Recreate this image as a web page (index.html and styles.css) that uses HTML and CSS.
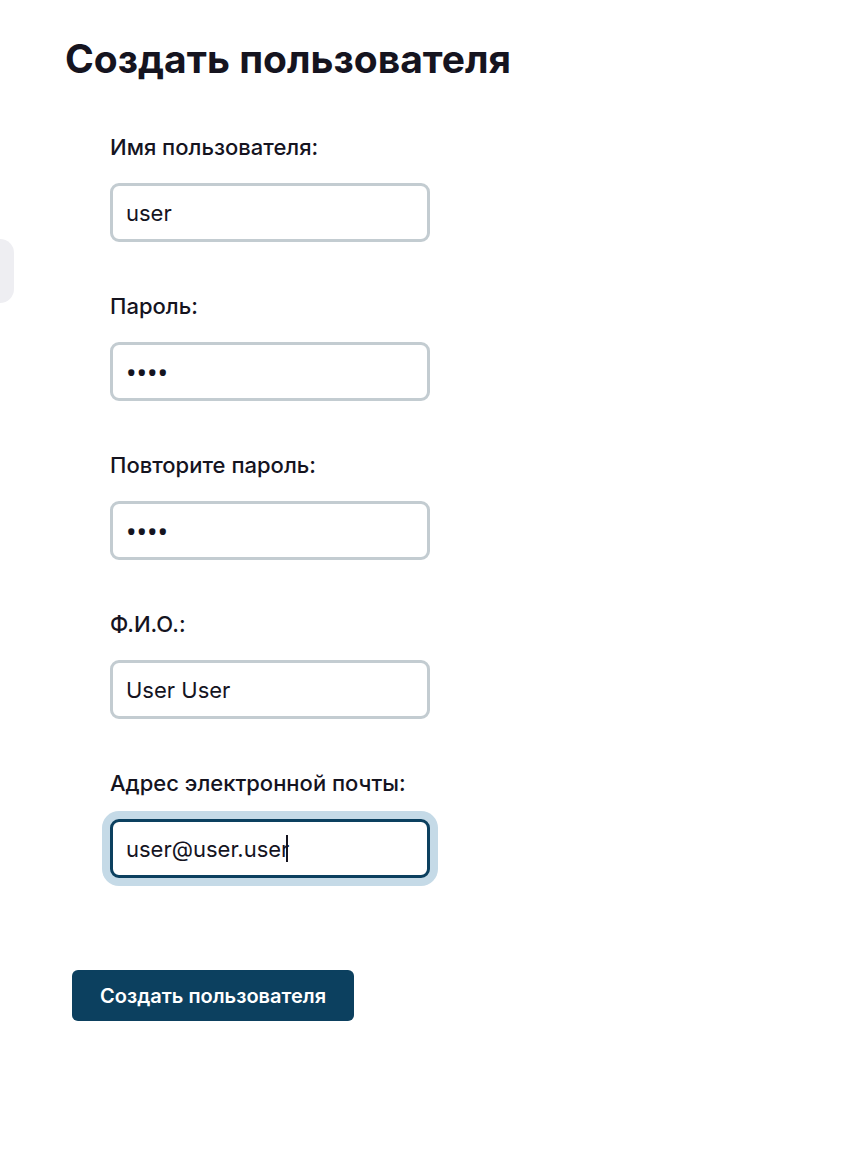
FILE: index.html
```html
<!DOCTYPE html>
<html lang="ru">
<head>
<meta charset="utf-8">
<meta name="viewport" content="width=device-width, initial-scale=1">
<title>Создать пользователя</title>
<link rel="stylesheet" href="styles.css">
</head>
<body>
<button class="drawer-handle" type="button" aria-label="Меню"></button>
<main class="page">
  <h1 class="title">Создать пользователя</h1>
  <form class="form">
    <div class="fields">
      <div class="field">
        <label class="label" for="username">Имя пользователя:</label>
        <input class="input" id="username" type="text" value="user">
      </div>
      <div class="field">
        <label class="label" for="password">Пароль:</label>
        <input class="input input-password" id="password" type="password" value="user">
      </div>
      <div class="field">
        <label class="label" for="password-repeat">Повторите пароль:</label>
        <input class="input input-password" id="password-repeat" type="password" value="user">
      </div>
      <div class="field">
        <label class="label" for="fullname">Ф.И.О.:</label>
        <input class="input" id="fullname" type="text" value="User User">
      </div>
      <div class="field">
        <label class="label" for="email">Адрес электронной почты:</label>
        <div class="active-field">
          <input class="input input-active" id="email" type="text" value="user@user.user">
          <span class="caret"></span>
        </div>
      </div>
    </div>
    <button class="submit" type="submit">Создать пользователя</button>
  </form>
</main>
</body>
</html>
```
FILE: styles.css
```css
* {
  box-sizing: border-box;
}

body {
  margin: 0;
  background: #fff;
  color: #15141f;
  font-family: Inter, "Liberation Sans", sans-serif;
}

.drawer-handle {
  position: absolute;
  top: 239px;
  left: 0;
  width: 14px;
  height: 64px;
  padding: 0;
  border: 0;
  border-radius: 0 14px 14px 0;
  background: #eeeef2;
}

.page {
  padding: 34px 65px 64px;
}

.title {
  margin: 0;
  font-size: 39px;
  font-weight: 700;
  line-height: 50px;
}

.form {
  padding: 49px 7px 0;
}

.fields {
  display: flex;
  flex-direction: column;
  gap: 50px;
  padding-left: 38px;
}

.field {
  display: flex;
  flex-direction: column;
  gap: 21px;
  max-width: 320px;
}

.label {
  font-size: 22px;
  font-weight: 500;
  line-height: 29px;
}

.input {
  display: block;
  width: 100%;
  height: 59px;
  padding: 0 13px;
  border: 3px solid #c3ccd1;
  border-radius: 9px;
  outline: none;
  background: #fff;
  color: inherit;
  font-family: inherit;
  font-size: 22px;
}

.input-password {
  font-family: "Noto Sans", sans-serif;
  font-size: 28px;
}

.active-field {
  position: relative;
}

.input-active {
  border-color: #0c405f;
  box-shadow: 0 0 0 8px #c5dae7;
}

.caret {
  position: absolute;
  top: 16px;
  left: 176px;
  width: 2px;
  height: 27px;
  background: #15141f;
}

.submit {
  display: block;
  height: 51px;
  margin-top: 92px;
  padding: 0 28px;
  border: 0;
  border-radius: 6px;
  background: #0c405f;
  color: #fff;
  font-family: inherit;
  font-size: 20px;
  font-weight: 600;
}
```
